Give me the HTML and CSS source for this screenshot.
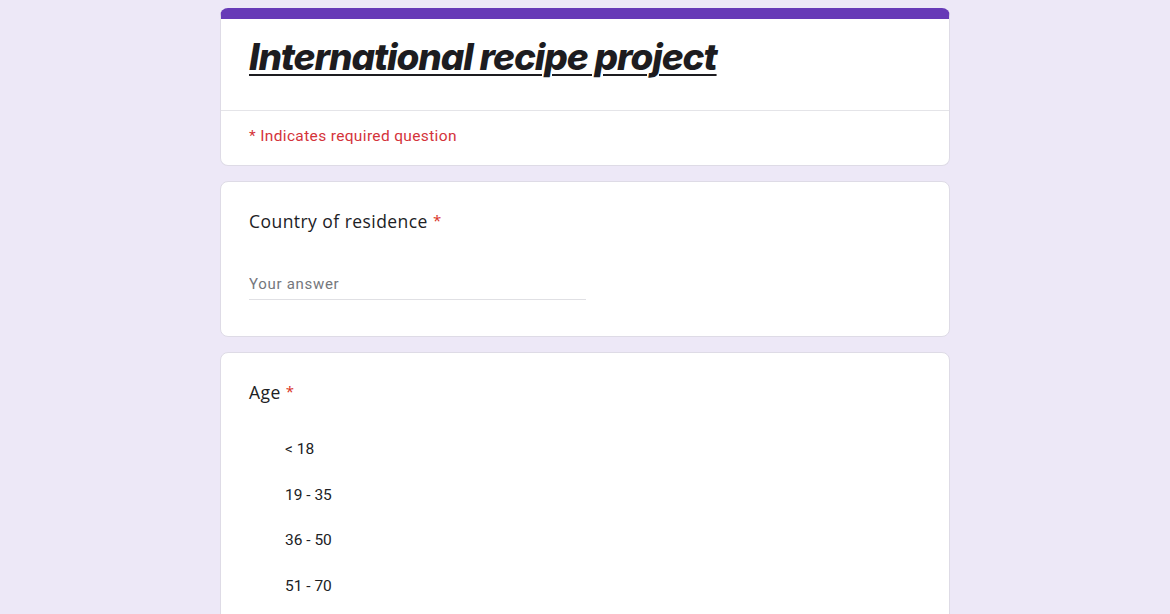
FILE: index.html
```html
<!DOCTYPE html>
<html lang="en">
<head>
    <meta charset="UTF-8">
    <meta name="viewport" content="width=device-width, initial-scale=1.0">
    <title>International recipe project</title>
    <link rel="stylesheet" href="styles.css">
</head>
<body>

    <div class="form-container">

        <!-- Header card -->
        <div class="card header-card">
            <div class="header-top">
                <h1 class="form-title">International recipe project</h1>
            </div>
            <div class="header-bottom">
                <span class="required-note">* Indicates required question</span>
            </div>
        </div>

        <!-- Country question -->
        <div class="card question-card">
            <div class="question-title">Country of residence <span class="star">*</span></div>
            <div class="answer-line">
                <input type="text" placeholder="Your answer" />
            </div>
        </div>

        <!-- Age question -->
        <div class="card question-card age-card">
            <div class="question-title">Age <span class="star">*</span></div>
            <div class="options">
                <div class="option">&lt; 18</div>
                <div class="option">19 - 35</div>
                <div class="option">36 - 50</div>
                <div class="option">51 - 70</div>
            </div>
        </div>

    </div>

</body>
</html>
```

FILE: styles.css
```css
body {
    margin: 0;
    padding: 0;
    background: #ede8f7;
    font-family: Roboto, "Liberation Sans", sans-serif;
    color: #202124;
    overflow: hidden;
}

.form-container {
    width: 730px;
    margin: 8px auto 0;
    display: flex;
    flex-direction: column;
    gap: 15px;
}

.card {
    background: #ffffff;
    border: 1px solid #dedbe6;
    border-radius: 8px;
    box-sizing: border-box;
}

.header-card {
    border-top: 11px solid #673ab7;
    height: 158px;
}

.header-top {
    height: 92px;
    padding: 16px 28px 0;
    box-sizing: border-box;
    border-bottom: 1px solid #e4e4e8;
}

.form-title {
    margin: 0;
    font-family: Inter, "Open Sans", sans-serif;
    font-size: 37px;
    font-weight: 800;
    font-style: italic;
    letter-spacing: -1.1px;
    line-height: 44px;
    text-decoration: underline;
    text-decoration-thickness: 2px;
    text-underline-offset: 4px;
    color: #1d1c20;
}

.header-bottom {
    padding: 15px 28px 0;
}

.required-note {
    font-size: 15.5px;
    color: #d4333a;
    letter-spacing: 0.35px;
}

.question-card {
    height: 156px;
    padding: 25px 28px 0;
}

.question-title {
    font-family: "Open Sans", sans-serif;
    font-size: 17.5px;
    line-height: 26px;
    color: #202124;
    letter-spacing: 0.45px;
}

.star {
    color: #d93025;
    font-size: 15px;
    vertical-align: 2px;
}

.answer-line {
    width: 337px;
    margin-top: 40px;
    border-bottom: 1px solid #e0e0e4;
}

.answer-line input {
    width: 100%;
    border: none;
    outline: none;
    padding: 0 0 6px;
    font-family: Roboto, sans-serif;
    font-size: 15px;
    letter-spacing: 0.7px;
    background: transparent;
}

.answer-line input::placeholder {
    color: #75777c;
}

.age-card {
    height: 300px;
}

.options {
    margin-top: 34px;
    padding-left: 36px;
    display: flex;
    flex-direction: column;
    gap: 25.5px;
}

.option {
    font-size: 15.5px;
    line-height: 20px;
    color: #202124;
}
```
